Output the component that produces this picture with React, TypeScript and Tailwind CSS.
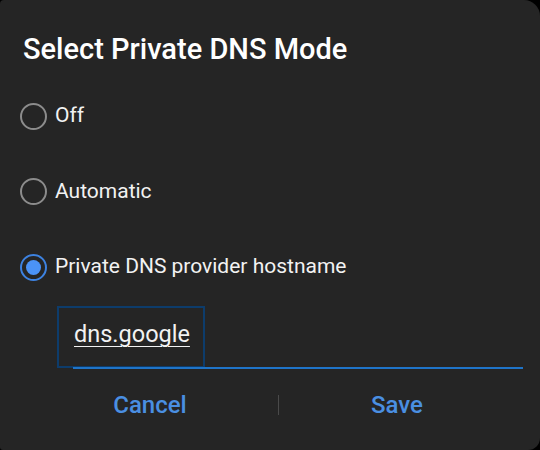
import { useState } from "react"

const options = [
  { id: "off", label: "Off" },
  { id: "auto", label: "Automatic" },
  { id: "host", label: "Private DNS provider hostname" },
]

function Radio({ checked }: { checked: boolean }) {
  return (
    <span
      className={
        checked
          ? "flex h-[27px] w-[27px] items-center justify-center rounded-full border-2 border-[#3d82e0]"
          : "flex h-[27px] w-[27px] items-center justify-center rounded-full border-2 border-[#8c8c8c]"
      }
    >
      {checked && <span className="h-[15px] w-[15px] rounded-full bg-[#4b93f7]" />}
    </span>
  )
}

export default function App() {
  const [mode, setMode] = useState("host")

  return (
    <div className="h-[450px] w-[540px] bg-black font-['Roboto',sans-serif]">
      <div className="flex h-full flex-col rounded-tl-[4px] rounded-tr-[16px] rounded-br-[12px] rounded-bl-[3px] bg-[#252525]">
        <h1 className="pt-[31px] pl-[23px] text-[29px] leading-[36px] font-medium text-white">
          Select Private DNS Mode
        </h1>

        <div className="mt-[32px] flex flex-col gap-[41.5px] pl-[20px]">
          {options.map((o) => (
            <button
              key={o.id}
              onClick={() => setMode(o.id)}
              className="flex h-[34px] items-center gap-[8px] text-left"
            >
              <Radio checked={mode === o.id} />
              <span className="text-[21px] text-[#f2f2f2]">{o.label}</span>
            </button>
          ))}
        </div>

        <div className="relative mt-[22px] ml-[57px] mr-[17px] h-[63px]">
          <div className="absolute top-0 left-0 h-[62px] w-[148px] border-2 border-[#0d3c6b]" />
          <div className="absolute right-0 bottom-0 left-[16px] h-[2px] bg-[#1f74c8]" />
          <div className="relative pt-[13px] pl-[17px] text-[23.5px] leading-[30px] text-[#f2f2f2] underline decoration-1 underline-offset-[4px]">
            dns.google
          </div>
        </div>

        <div className="mt-[21px] flex items-center pl-[22px]">
          <button className="w-[256px] text-center text-[24px] leading-[30px] font-medium text-[#4a8fe2]">Cancel</button>
          <span className="h-[20px] w-px bg-[#4a4a4a]" />
          <button className="w-[236px] text-center text-[24px] leading-[30px] font-medium text-[#4a8fe2]">Save</button>
        </div>
      </div>
    </div>
  )
}
